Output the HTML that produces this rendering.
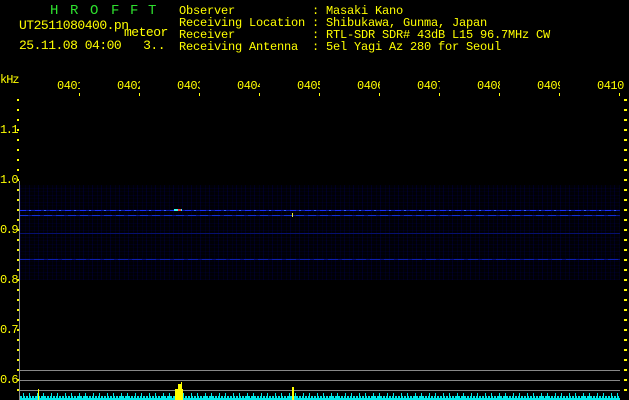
<!DOCTYPE html>
<html><head><meta charset="utf-8"><style>
*{margin:0;padding:0}
body{width:629px;height:400px;background:#000;overflow:hidden;position:relative;font-family:"Liberation Mono","DejaVu Sans Mono",monospace;color:#ffff00;font-size:12px;line-height:12px}
.a{position:absolute;white-space:pre}
.t{position:absolute;width:23px;overflow:hidden;top:80px;font-size:12px;white-space:pre;letter-spacing:-0.5px}
.tk{position:absolute;background:#ff0;width:1px;height:3px;top:93px}
.yl{position:absolute;left:0;font-size:12px;letter-spacing:-1.5px}
.g{position:absolute;left:20px;width:600px;height:1px;background:#888}
.h{position:absolute;left:20px;width:600px}
.k{position:absolute;top:4px;color:#2ee02e;font-size:14px;line-height:14px}
</style></head><body>
<div class="k" style="left:50px">H</div><div class="k" style="left:70px">R</div><div class="k" style="left:90px">O</div><div class="k" style="left:111px">F</div><div class="k" style="left:130px">F</div><div class="k" style="left:148px">T</div>
<div class="a" style="left:19px;top:20px;font-size:13px;letter-spacing:-0.5px">UT2511080400.pn</div>
<div class="a" style="left:124px;top:27px;font-size:13px;letter-spacing:-0.5px">meteor</div>
<div class="a" style="left:19px;top:40px;font-size:13px;letter-spacing:-0.5px">25.11.08 04:00   3..</div>
<div class="a" style="left:179px;top:5px;letter-spacing:-0.2px">Observer           : Masaki Kano
Receiving Location : Shibukawa, Gunma, Japan
Receiver           : RTL-SDR SDR# 43dB L15 96.7MHz CW
Receiving Antenna  : 5el Yagi Az 280 for Seoul</div>
<div class="a" style="left:0;top:74px;font-size:12px;letter-spacing:-1px">kHz</div>
<div class="t" style="left:57px">0401</div><div class="t" style="left:117px">0402</div><div class="t" style="left:177px">0403</div><div class="t" style="left:237px">0404</div><div class="t" style="left:297px">0405</div><div class="t" style="left:357px">0406</div><div class="t" style="left:417px">0407</div><div class="t" style="left:477px">0408</div><div class="t" style="left:537px">0409</div><div class="t" style="left:597px;width:30px">0410</div>
<div class="tk" style="left:79px"></div><div class="tk" style="left:139px"></div><div class="tk" style="left:199px"></div><div class="tk" style="left:259px"></div><div class="tk" style="left:319px"></div><div class="tk" style="left:379px"></div><div class="tk" style="left:439px"></div><div class="tk" style="left:499px"></div><div class="tk" style="left:559px"></div><div class="tk" style="left:619px"></div>
<div class="yl" style="top:124px">1.1</div><div class="yl" style="top:174px">1.0</div><div class="yl" style="top:224px">0.9</div><div class="yl" style="top:274px">0.8</div><div class="yl" style="top:324px">0.7</div><div class="yl" style="top:374px">0.6</div>
<div style="position:absolute;left:17px;top:99px;width:2px;height:300px;background:repeating-linear-gradient(to bottom,#ff0 0 2px,transparent 2px 10px)"></div>
<div style="position:absolute;left:624px;top:99px;width:3px;height:300px;background:repeating-linear-gradient(to bottom,#ff0 0 2px,transparent 2px 10px)"></div>
<div style="position:absolute;left:19px;top:181px;width:1px;height:219px;background:#888"></div>
<div class="h" style="top:185px;height:95px;background:
repeating-linear-gradient(90deg,rgba(0,0,150,.18) 0 1px,transparent 1px 5px,rgba(0,0,120,.14) 5px 6px,transparent 6px 9px),
repeating-linear-gradient(0deg,rgba(0,0,130,.12) 0 1px,transparent 1px 4px,rgba(0,0,100,.1) 4px 5px,transparent 5px 7px),#000006"></div>
<div class="h" style="top:210px;height:1px;background:repeating-linear-gradient(90deg,#1a30ff 0 6px,#0a1aa0 6px 9px,#3060ff 9px 11px,#0c1cb0 11px 15px)"></div>
<div class="h" style="top:215px;height:1px;background:repeating-linear-gradient(90deg,#1030d8 0 8px,#081890 8px 12px)"></div>
<div class="h" style="top:233px;height:1px;background:#061070"></div>
<div class="h" style="top:259px;height:1px;background:repeating-linear-gradient(90deg,#0c20b0 0 10px,#061080 10px 14px)"></div>
<div style="position:absolute;left:174px;top:209px;width:8px;height:2px;background:#3fe"></div>
<div style="position:absolute;left:178px;top:209px;width:3px;height:2px;background:#f33"></div>
<div style="position:absolute;left:292px;top:213px;width:1px;height:4px;background:#ee3"></div>
<div class="g" style="top:370px"></div><div class="g" style="top:380px"></div><div class="g" style="top:390px"></div>
<div class="h" style="top:393px;height:7px;background:repeating-linear-gradient(90deg,transparent 0 3px,#00e8e8 3px 4px,transparent 4px 9px,#00e8e8 9px 10px,transparent 10px 14px)"></div>
<div class="h" style="top:396px;height:4px;background:repeating-linear-gradient(90deg,#00e8e8 0 2px,transparent 2px 3px,#00e8e8 3px 5px,transparent 5px 6px)"></div>
<div class="h" style="top:398px;height:2px;background:#00e8e8"></div>
<div style="position:absolute;left:38px;top:389px;width:1px;height:11px;background:#ff0"></div>
<div style="position:absolute;left:175px;top:389px;width:8px;height:11px;background:#ff0"></div>
<div style="position:absolute;left:178px;top:384px;width:4px;height:6px;background:#ff0"></div>
<div style="position:absolute;left:181px;top:382px;width:1px;height:3px;background:#ff0"></div>
<div style="position:absolute;left:292px;top:387px;width:2px;height:13px;background:#ff0"></div>
</body></html>
